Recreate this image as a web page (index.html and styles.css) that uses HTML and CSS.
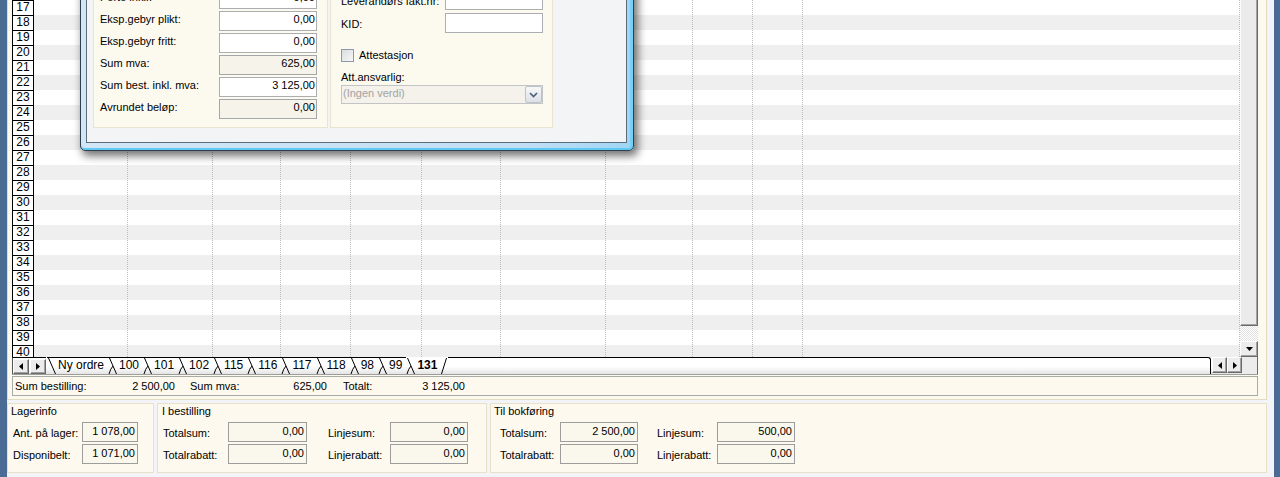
FILE: index.html
```html
<!DOCTYPE html>
<html lang="no">
<head>
<meta charset="utf-8">
<title>Bestilling</title>
<link rel="stylesheet" href="styles.css">
</head>
<body>
<div class="app">
  <div class="edge-left"></div>
  <div class="main">
    <div class="sheet">
      <div class="grid">
        <div class="row-heads">
          <div class="rh">17</div><div class="rh">18</div><div class="rh">19</div><div class="rh">20</div>
          <div class="rh">21</div><div class="rh">22</div><div class="rh">23</div><div class="rh">24</div>
          <div class="rh">25</div><div class="rh">26</div><div class="rh">27</div><div class="rh">28</div>
          <div class="rh">29</div><div class="rh">30</div><div class="rh">31</div><div class="rh">32</div>
          <div class="rh">33</div><div class="rh">34</div><div class="rh">35</div><div class="rh">36</div>
          <div class="rh">37</div><div class="rh">38</div><div class="rh">39</div><div class="rh">40</div>
        </div>
        <div class="cells">
          <div class="col c1"></div><div class="col c2"></div><div class="col c3"></div>
          <div class="col c4"></div><div class="col c5"></div><div class="col c6"></div>
          <div class="col c7"></div><div class="col c8"></div><div class="col c9"></div>
          <div class="col c10"></div><div class="col c11"></div>
        </div>
        <div class="vscroll">
          <div class="thumb"></div>
          <div class="track"></div>
          <div class="sbtn vdown"><svg width="7" height="4" viewBox="0 0 7 4"><path d="M0 0h7L3.5 4z"/></svg></div>
        </div>
      </div>
      <div class="tabstrip">
        <div class="nav">
          <div class="sbtn nbtn"><svg width="4" height="7" viewBox="0 0 4 7"><path d="M4 0v7L0 3.5z"/></svg></div>
          <div class="sbtn nbtn"><svg width="4" height="7" viewBox="0 0 4 7"><path d="M0 0v7L4 3.5z"/></svg></div>
        </div>
        <div class="tabs">
          <span class="sep"><svg width="10" height="16" viewBox="0 0 10 16"><path d="M1.5 0L8.5 16"/></svg></span>
          <span class="tab">Ny ordre</span>
          <span class="sep"><svg width="10" height="16" viewBox="0 0 10 16"><path d="M1.5 0L8.5 16M1 16Q2.5 10.5 5 8"/></svg></span>
          <span class="tab">100</span>
          <span class="sep"><svg width="10" height="16" viewBox="0 0 10 16"><path d="M1.5 0L8.5 16M1 16Q2.5 10.5 5 8"/></svg></span>
          <span class="tab">101</span>
          <span class="sep"><svg width="10" height="16" viewBox="0 0 10 16"><path d="M1.5 0L8.5 16M1 16Q2.5 10.5 5 8"/></svg></span>
          <span class="tab">102</span>
          <span class="sep"><svg width="10" height="16" viewBox="0 0 10 16"><path d="M1.5 0L8.5 16M1 16Q2.5 10.5 5 8"/></svg></span>
          <span class="tab">115</span>
          <span class="sep"><svg width="10" height="16" viewBox="0 0 10 16"><path d="M1.5 0L8.5 16M1 16Q2.5 10.5 5 8"/></svg></span>
          <span class="tab">116</span>
          <span class="sep"><svg width="10" height="16" viewBox="0 0 10 16"><path d="M1.5 0L8.5 16M1 16Q2.5 10.5 5 8"/></svg></span>
          <span class="tab">117</span>
          <span class="sep"><svg width="10" height="16" viewBox="0 0 10 16"><path d="M1.5 0L8.5 16M1 16Q2.5 10.5 5 8"/></svg></span>
          <span class="tab">118</span>
          <span class="sep"><svg width="10" height="16" viewBox="0 0 10 16"><path d="M1.5 0L8.5 16M1 16Q2.5 10.5 5 8"/></svg></span>
          <span class="tab">98</span>
          <span class="sep"><svg width="10" height="16" viewBox="0 0 10 16"><path d="M1.5 0L8.5 16M1 16Q2.5 10.5 5 8"/></svg></span>
          <span class="tab">99</span>
          <span class="active">
            <span class="sep open"><svg width="10" height="16" viewBox="0 0 10 16"><path d="M1.5 0L8.5 16M1 16Q2.5 10.5 5 8"/></svg></span>
            <span class="tab open on">131</span>
            <span class="sep open end"><svg width="6" height="16" viewBox="0 0 6 16"><path d="M0.5 16L5.5 0"/></svg></span>
          </span>
        </div>
        <div class="hfill"></div>
        <div class="hbtns">
          <div class="sbtn hbtn"><svg width="4" height="7" viewBox="0 0 4 7"><path d="M4 0v7L0 3.5z"/></svg></div>
          <div class="sbtn hbtn"><svg width="4" height="7" viewBox="0 0 4 7"><path d="M0 0v7L4 3.5z"/></svg></div>
        </div>
        <div class="corner"></div>
      </div>
      <div class="status">
        <div class="sf sf1"><span>Sum bestilling:</span><span>2 500,00</span></div>
        <div class="sf sf2"><span>Sum mva:</span><span>625,00</span></div>
        <div class="sf sf3"><span>Totalt:</span><span>3 125,00</span></div>
      </div>
    </div>
    <div class="panels">
      <div class="panel p1">
        <div class="ptitle">Lagerinfo</div>
        <div class="pgrid">
          <div class="lbl">Ant. på lager:</div><div class="box">1 078,00</div>
          <div class="lbl">Disponibelt:</div><div class="box">1 071,00</div>
        </div>
      </div>
      <div class="panel p2">
        <div class="ptitle">I bestilling</div>
        <div class="pgrid">
          <div class="lbl">Totalsum:</div><div class="box">0,00</div><div></div>
          <div class="lbl">Linjesum:</div><div class="box">0,00</div>
          <div class="lbl">Totalrabatt:</div><div class="box">0,00</div><div></div>
          <div class="lbl">Linjerabatt:</div><div class="box">0,00</div>
        </div>
      </div>
      <div class="panel p3">
        <div class="ptitle">Til bokføring</div>
        <div class="pgrid">
          <div class="lbl">Totalsum:</div><div class="box">2 500,00</div><div></div>
          <div class="lbl">Linjesum:</div><div class="box">500,00</div>
          <div class="lbl">Totalrabatt:</div><div class="box">0,00</div><div></div>
          <div class="lbl">Linjerabatt:</div><div class="box">0,00</div>
        </div>
      </div>
    </div>
  </div>
  <div class="edge-right"></div>
</div>

<div class="dlg">
  <div class="client">
    <div class="dpanel dp1">
      <div class="drow"><span class="dlbl">Porto inkl.:</span><span class="dbox">0,00</span></div>
      <div class="drow"><span class="dlbl">Eksp.gebyr plikt:</span><span class="dbox">0,00</span></div>
      <div class="drow"><span class="dlbl">Eksp.gebyr fritt:</span><span class="dbox">0,00</span></div>
      <div class="drow"><span class="dlbl">Sum mva:</span><span class="dbox ro">625,00</span></div>
      <div class="drow"><span class="dlbl">Sum best. inkl. mva:</span><span class="dbox">3 125,00</span></div>
      <div class="drow"><span class="dlbl">Avrundet beløp:</span><span class="dbox ro">0,00</span></div>
    </div>
    <div class="dpanel dp2">
      <div class="drow"><span class="dlbl">Leverandørs fakt.nr:</span><span class="dbox"></span></div>
      <div class="drow kid"><span class="dlbl">KID:</span><span class="dbox"></span></div>
      <div class="chkrow"><span class="chk"></span><span class="chktxt">Attestasjon</span></div>
      <div class="alabel">Att.ansvarlig:</div>
      <div class="combo"><span class="ctext">(Ingen verdi)</span><span class="cbtn"><svg width="9" height="6" viewBox="0 0 9 6"><path d="M1 1l3.5 3.5L8 1"/></svg></span></div>
    </div>
  </div>
</div>
</body>
</html>
```

FILE: styles.css
```css
* { box-sizing: border-box; }
html, body { margin: 0; height: 477px; overflow: hidden; }
body {
  position: relative;
  background: #f2f4f7;
  font-family: "Liberation Sans", Arial, sans-serif;
  font-size: 11px;
  color: #000;
}
.app { display: flex; height: 477px; }
.edge-left { width: 7px; flex: none; background: #4a6b94; }
.edge-right { width: 13px; flex: none; background: #f2f4f7; border-right: 6px solid #4a6b94; }
.main { width: 1260px; flex: none; display: flex; flex-direction: column; }

/* spreadsheet block */
.sheet {
  background: #fcf9ee;
  border: 1px solid #e4dcc2;
  border-top: 0;
  padding: 0 8px 3px 4px;
}
.grid { display: flex; height: 357px; overflow: hidden; }
.row-heads { width: 22px; flex: none; }
.rh {
  height: 15px;
  border: 1px solid #000;
  border-bottom: 0;
  background: #fff;
  text-align: center;
  font-size: 12px;
  line-height: 12px;
}
.cells {
  width: 1206px;
  flex: none;
  display: flex;
  background: repeating-linear-gradient(to bottom, #fff 0 15px, #efefef 15px 30px);
}
.col { flex: none; border-right: 1px dotted #bdbdbd; }
.c1 { width: 94px; } .c2 { width: 85px; } .c3 { width: 68px; } .c4 { width: 70px; }
.c5 { width: 71px; } .c6 { width: 79px; } .c7 { width: 105px; } .c8 { width: 87px; }
.c9 { width: 60px; } .c10 { width: 50px; } .c11 { width: 437px; }

.vscroll { width: 18px; flex: none; display: flex; flex-direction: column; background: #ececec; }
.thumb {
  height: 326px;
  background: #ebebeb;
  border-left: 1px solid #fbfbfb;
  border-right: 1px solid #6a6a6a;
  border-bottom: 1px solid #6a6a6a;
  box-shadow: inset -1px -1px 0 #a3a3a3;
}
.track {
  height: 15px;
  background: repeating-conic-gradient(#fff 0 25%, #e2e2e2 0 50%) 0 0 / 2px 2px;
}
.sbtn {
  background: #ececec;
  border: 1px solid;
  border-color: #fff #6a6a6a #6a6a6a #fff;
  box-shadow: inset -1px -1px 0 #a3a3a3;
  display: flex;
  align-items: center;
  justify-content: center;
  flex: none;
}
.sbtn svg { display: block; fill: #000; }
.vdown { height: 16px; }

/* tab strip */
.tabstrip {
  display: flex;
  height: 18px;
  background: linear-gradient(#fff 55%, #e4e4e4);
  border-bottom: 1px solid #9e9e9e;
  font-size: 12px;
}
.nav {
  width: 34px;
  flex: none;
  display: flex;
  gap: 1px;
  padding: 1px 0 0 0;
  border-top: 1px solid #000;
  border-left: 1px solid #555;
  margin-right: 1px;
}
.nbtn { width: 16px; height: 15px; }
.tabs { display: flex; align-items: stretch; flex: none; }
.sep { width: 10px; flex: none; border-top: 1px solid #000; }
.sep svg { display: block; fill: none; stroke: #000; stroke-width: 1; }
.sep.end { width: 6px; }
.tab { border-top: 1px solid #000; padding: 0 4px 0 1px; line-height: 15px; white-space: nowrap; }
.active { display: flex; }
.open { border-top-color: transparent; }
.tab.on { font-weight: bold; }
.hfill {
  flex: 1;
  margin-left: 1px;
  margin-right: 1px;
  border-top: 1px solid #000;
  border-right: 1px solid #000;
  border-top-right-radius: 3px;
  background: linear-gradient(#fff 55%, #e4e4e4);
}
.hbtns { display: flex; flex: none; align-items: flex-start; }
.hbtn { width: 15px; height: 16px; }
.corner { width: 16px; flex: none; background: #ececec; border-right: 1px solid #6a6a6a; }

/* status line */
.status {
  margin-top: 1px;
  height: 20px;
  border: 1px solid #a8aca5;
  background: #fdf9ee;
  display: flex;
  line-height: 18px;
}
.sf { display: flex; justify-content: space-between; flex: none; }
.sf1 { margin-left: 2px; width: 160px; }
.sf2 { margin-left: 15px; width: 137px; }
.sf3 { margin-left: 16px; width: 122px; }

/* bottom info panels */
.panels { display: flex; gap: 3px; margin-top: 3px; height: 70px; }
.panel { background: #fdf9ee; border: 1px solid #e8e0c8; padding-top: 1px; }
.p1 { width: 147px; }
.p2 { width: 330px; }
.p3 { width: 777px; }
.ptitle { line-height: 13px; padding-left: 3px; }
.p2 .ptitle { padding-left: 4px; }
.pgrid { display: grid; grid-template-rows: 20px 20px; row-gap: 2px; margin-top: 4px; }
.p1 .pgrid { grid-template-columns: 69px 56px; padding-left: 5px; }
.p2 .pgrid { grid-template-columns: 65px 79px 21px 62px 78px; padding-left: 5px; }
.p3 .pgrid { grid-template-columns: 60px 78px 19px 60px 78px; padding-left: 9px; }
.lbl { padding-top: 2px; line-height: 18px; white-space: nowrap; }
.box {
  border: 1px solid #9d9d9d;
  background: #faf7ec;
  text-align: right;
  padding-right: 2px;
  line-height: 17px;
}

/* floating dialog window */
.dlg {
  position: absolute;
  left: 80px;
  top: -60px;
  width: 554px;
  height: 211px;
  border: 1px solid #2f3f50;
  border-radius: 0 0 5px 5px;
  background: linear-gradient(90deg, #d2e6f5, #c2dff4 80%, #9fd6f5);
  padding: 25px 6px 7px 5px;
  display: flex;
  box-shadow: inset 0 -2px 0 #5fc9f3, inset -3px 0 0 #78cff5, 3px 4px 9px 1px rgba(0, 0, 0, 0.55);
}
.client {
  flex: 1;
  border: 1px solid #5d6d7c;
  background: #f2f4f6;
  display: flex;
  align-items: stretch;
  gap: 2px;
  padding: 4px 0 14px 6px;
}
.dpanel {
  background: #fcfaef;
  border: 1px solid #e9e3cf;
  display: flex;
  flex-direction: column;
  justify-content: flex-end;
}
.dp1 { width: 235px; padding: 0 10px 8px 6px; }
.dp2 { width: 223px; padding: 0 9px 23px 10px; }
.drow { display: flex; height: 20px; margin-top: 2px; }
.dp2 .drow.kid { margin-top: 3px; }
.dlbl { flex: 1; line-height: 16px; white-space: nowrap; }
.dp2 .dlbl { padding-top: 3px; }
.dbox {
  width: 98px;
  flex: none;
  border: 1px solid #abadb3;
  background: #fff;
  text-align: right;
  padding-right: 1px;
  line-height: 15px;
}
.dbox.ro { background: #f6f4ea; border-color: #a4a7aa; }
.chkrow { display: flex; align-items: center; height: 13px; margin-top: 16px; }
.chk {
  width: 13px;
  height: 13px;
  flex: none;
  border: 1px solid #8b98ad;
  background: linear-gradient(135deg, #dadcde, #f8f8f8);
  margin-right: 5px;
}
.chktxt { line-height: 13px; }
.alabel { margin-top: 8px; height: 14px; line-height: 14px; }
.combo {
  margin-top: 1px;
  height: 19px;
  border: 1px solid #c2c4c6;
  background: #f4f2ea;
  display: flex;
  justify-content: space-between;
  color: #a3a3a3;
  padding-left: 1px;
}
.ctext { line-height: 14px; }
.cbtn {
  width: 17px;
  height: 17px;
  border: 1px solid #bcc3cb;
  border-radius: 2px;
  background: linear-gradient(#f7f8f9, #dce1e6);
  display: flex;
  align-items: center;
  justify-content: center;
}
.cbtn svg { display: block; fill: none; stroke: #4b5e7c; stroke-width: 1.6; }
```
